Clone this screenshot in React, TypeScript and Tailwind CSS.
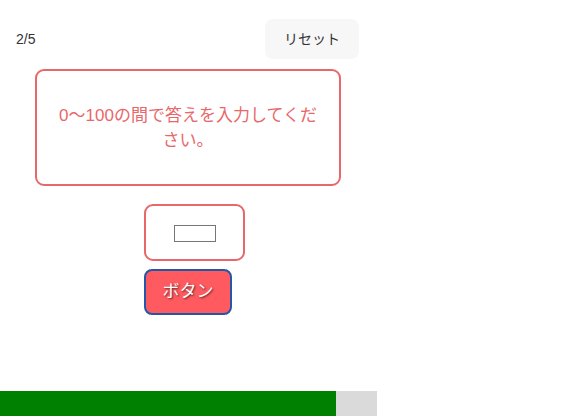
import React from "react";

export default function App() {
  return (
    <div
      className="w-[570px] h-[416px] overflow-hidden bg-white relative"
      style={{ fontFamily: '"Liberation Sans", "Noto Sans CJK JP", sans-serif' }}
    >
      <div className="w-[375px] flex flex-col">
        <div className="flex items-center justify-between pl-[16px] pr-[16px] pt-[19px] h-[59px]">
          <span className="text-[14px] text-[#333]">2/5</span>
          <button className="w-[94px] h-[40px] rounded-[8px] bg-[#f7f7f7] text-[14px] text-[#333]">
            リセット
          </button>
        </div>
        <div className="mt-[10px] ml-[35px] w-[306px] h-[117px] border-2 border-[#e8686a] rounded-[9px] flex items-center justify-center px-[17px]">
          <p className="text-[17px] leading-[25px] text-[#e8686a] text-center">
            0～100の間で答えを入力してください。
          </p>
        </div>
        <div className="ml-[144px] mt-[18px] w-[101px] h-[57px] border-2 border-[#e8686a] rounded-[9px] flex items-center justify-center">
          <input
            type="text"
            className="w-[42px] h-[17px] border border-[#767676] bg-white mt-[1px]"
          />
        </div>
        <button className="ml-[144px] mt-[8px] w-[88px] h-[46px] rounded-[8px] border-2 border-[#2457a6] bg-[#fe5a5f] text-white text-[17px] [text-shadow:1px_1px_2px_rgba(0,0,0,0.6)]">
          ボタン
        </button>
      </div>
      <div className="absolute left-0 top-[391px] w-[377px] h-[25px] bg-[#dadada]">
        <div className="w-[336px] h-full bg-[#008000]" />
      </div>
    </div>
  );
}
